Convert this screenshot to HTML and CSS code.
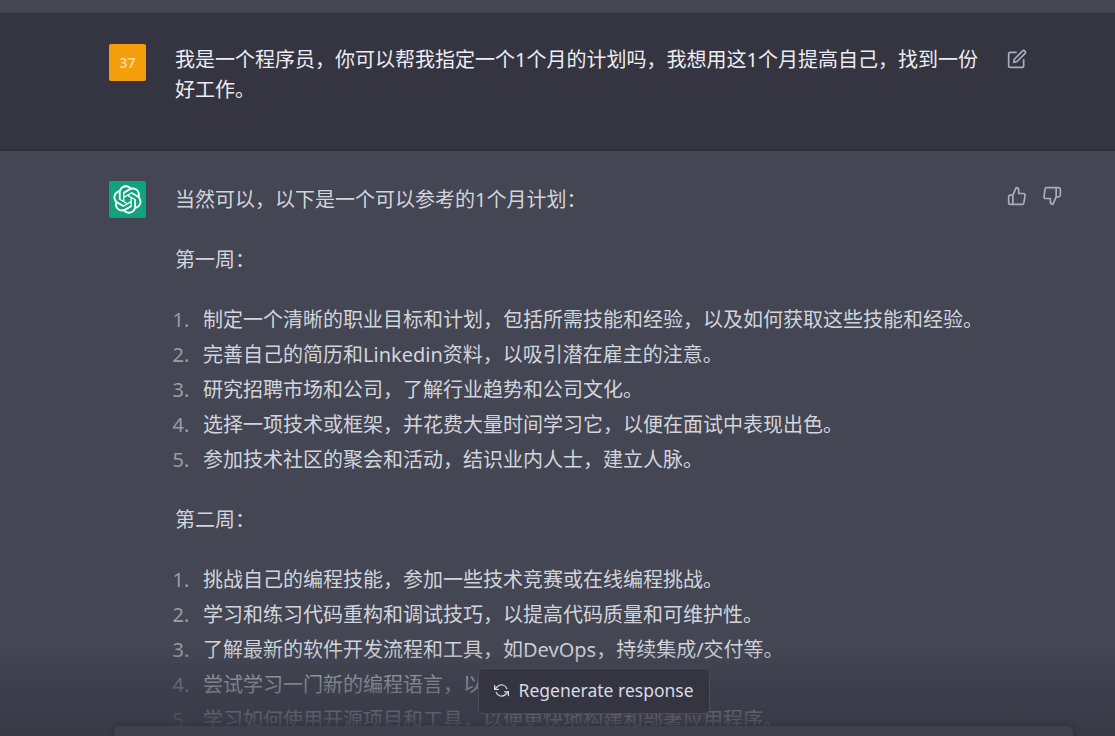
FILE: index.html
```html
<!DOCTYPE html>
<html lang="en">

<head>
    <meta charset="UTF-8">
    <meta name="viewport" content="width=device-width, initial-scale=1.0">
    <title>ChatGPT</title>
    <link rel="stylesheet" href="styles.css">
</head>

<body>

    <div class="chat">
        <!-- End of the previous answer -->
        <div class="prev-strip"></div>

        <!-- Question -->
        <div class="message user">
            <div class="avatar user-avatar">37</div>
            <div class="message-text">
                <p>我是一个程序员，你可以帮我指定一个1个月的计划吗，我想用这1个月提高自己，找到一份好工作。</p>
            </div>
            <div class="actions">
                <svg class="icon" viewBox="0 0 24 24">
                    <path d="M11 4H4a2 2 0 0 0-2 2v14a2 2 0 0 0 2 2h14a2 2 0 0 0 2-2v-7"></path>
                    <path d="M18.5 2.5a2.121 2.121 0 0 1 3 3L12 15l-4 1 1-4 9.5-9.5z"></path>
                </svg>
            </div>
        </div>

        <!-- Answer -->
        <div class="message assistant">
            <div class="avatar bot-avatar">
                <svg viewBox="0 0 41 41">
                    <path fill="currentColor" d="M37.5324 16.8707C37.9808 15.5241 38.1363 14.0974 37.9886 12.6859C37.8409 11.2744 37.3934 9.91076 36.676 8.68622C35.6126 6.83404 33.9882 5.3676 32.0373 4.4985C30.0864 3.62941 27.9098 3.40259 25.8215 3.85078C24.8796 2.7893 23.7219 1.94125 22.4257 1.36341C21.1295 0.785575 19.7249 0.491269 18.3058 0.500197C16.1708 0.495044 14.0893 1.16803 12.3614 2.42214C10.6335 3.67624 9.34853 5.44666 8.6917 7.47815C7.30085 7.76286 5.98686 8.3414 4.8377 9.17505C3.68854 10.0087 2.73073 11.0782 2.02839 12.312C0.956464 14.1591 0.498905 16.2988 0.721698 18.4228C0.944492 20.5467 1.83612 22.5449 3.268 24.1293C2.81966 25.4759 2.66413 26.9026 2.81182 28.3141C2.95951 29.7256 3.40701 31.0892 4.12437 32.3138C5.18791 34.1659 6.8123 35.6322 8.76321 36.5013C10.7141 37.3704 12.8907 37.5973 14.9789 37.1492C15.9208 38.2107 17.0786 39.0587 18.3747 39.6366C19.6709 40.2144 21.0755 40.5087 22.4946 40.4998C24.6307 40.5054 26.7133 39.8321 28.4418 38.5772C30.1704 37.3223 31.4556 35.5506 32.1119 33.5179C33.5027 33.2332 34.8167 32.6547 35.9659 31.821C37.115 30.9874 38.0728 29.9178 38.7752 28.684C39.8458 26.8371 40.3023 24.6979 40.0789 22.5748C39.8556 20.4517 38.9639 18.4544 37.5324 16.8707ZM22.4978 37.8849C20.7443 37.8874 19.0459 37.2733 17.6994 36.1501C17.7601 36.117 17.8666 36.0586 17.936 36.0161L25.9004 31.4156C26.1003 31.3019 26.2663 31.137 26.3813 30.9378C26.4964 30.7386 26.5563 30.5124 26.5549 30.2825V19.0542L29.9213 20.998C29.9389 21.0068 29.9541 21.0198 29.9656 21.0359C29.977 21.052 29.9842 21.0707 29.9867 21.0902V30.3889C29.9842 32.375 29.1946 34.2791 27.7909 35.6841C26.3872 37.0892 24.4838 37.8806 22.4978 37.8849ZM6.39227 31.0064C5.51397 29.4888 5.19742 27.7107 5.49804 25.9832C5.55718 26.0187 5.66048 26.0818 5.73461 26.1244L13.699 30.7248C13.8975 30.8408 14.1233 30.902 14.3532 30.902C14.583 30.902 14.8088 30.8408 15.0073 30.7248L24.731 25.1103V28.9979C24.7321 29.0177 24.7283 29.0376 24.7199 29.0556C24.7115 29.0736 24.6988 29.0893 24.6829 29.1012L16.6317 33.7497C14.9096 34.7416 12.8643 35.0097 10.9447 34.4954C9.02506 33.9811 7.38785 32.7263 6.39227 31.0064ZM4.29707 13.6194C5.17156 12.0998 6.55279 10.9364 8.19885 10.3327C8.19885 10.4013 8.19491 10.5228 8.19491 10.6071V19.808C8.19351 20.0378 8.25334 20.2638 8.36823 20.4629C8.48312 20.6619 8.64893 20.8267 8.84863 20.9404L18.5723 26.5542L15.206 28.4979C15.1894 28.5089 15.1703 28.5155 15.1505 28.5173C15.1307 28.5191 15.1107 28.516 15.0924 28.5082L7.04046 23.8557C5.32135 22.8601 4.06716 21.2235 3.55289 19.3046C3.03862 17.3858 3.30624 15.3413 4.29707 13.6194ZM31.955 20.0556L22.2312 14.4411L25.5976 12.4981C25.6142 12.4872 25.6333 12.4805 25.6531 12.4787C25.6729 12.4769 25.6928 12.4801 25.7111 12.4879L33.7631 17.1364C34.9967 17.849 36.0017 18.8982 36.6606 20.1613C37.3194 21.4244 37.6047 22.849 37.4832 24.2684C37.3617 25.6878 36.8382 27.0432 35.9743 28.1759C35.1103 29.3086 33.9415 30.1717 32.6047 30.6641C32.6047 30.5947 32.6047 30.4733 32.6047 30.3889V21.188C32.6066 20.9586 32.5474 20.7328 32.4332 20.5338C32.319 20.3348 32.154 20.1698 31.955 20.0556ZM35.3055 15.0128C35.2464 14.9765 35.1431 14.9142 35.069 14.8717L27.1045 10.2712C26.906 10.1554 26.6803 10.0943 26.4504 10.0943C26.2206 10.0943 25.9948 10.1554 25.7963 10.2712L16.0726 15.8858V11.9982C16.0715 11.9783 16.0753 11.9585 16.0837 11.9405C16.0921 11.9225 16.1048 11.9068 16.1207 11.8949L24.1719 7.25025C25.4053 6.53903 26.8158 6.19376 28.2383 6.25482C29.6608 6.31589 31.0364 6.78077 32.2044 7.59508C33.3723 8.40939 34.2842 9.53945 34.8334 10.8531C35.3826 12.1667 35.5464 13.6095 35.3055 15.0128ZM14.2424 21.9419L10.8752 19.9981C10.8576 19.9893 10.8423 19.9763 10.8309 19.9602C10.8195 19.9441 10.8122 19.9254 10.8098 19.9058V10.6071C10.8107 9.18295 11.2173 7.78848 11.9819 6.58696C12.7466 5.38544 13.8377 4.42659 15.1275 3.82264C16.4173 3.21869 17.8524 2.99464 19.2649 3.1767C20.6775 3.35876 22.0089 3.93941 23.1034 4.85067C23.0427 4.88379 22.937 4.94215 22.8668 4.98473L14.9024 9.58517C14.7025 9.69878 14.5366 9.86356 14.4215 10.0626C14.3065 10.2616 14.2466 10.4877 14.2479 10.7175L14.2424 21.9419ZM16.071 17.9991L20.4018 15.4978L24.7325 17.9975V22.9985L20.4018 25.4983L16.071 22.9985V17.9991Z"></path>
                </svg>
            </div>
            <div class="message-text">
                <p>当然可以，以下是一个可以参考的1个月计划：</p>
                <p>第一周：</p>
                <ol>
                    <li>制定一个清晰的职业目标和计划，包括所需技能和经验，以及如何获取这些技能和经验。</li>
                    <li>完善自己的简历和Linkedin资料，以吸引潜在雇主的注意。</li>
                    <li>研究招聘市场和公司，了解行业趋势和公司文化。</li>
                    <li>选择一项技术或框架，并花费大量时间学习它，以便在面试中表现出色。</li>
                    <li>参加技术社区的聚会和活动，结识业内人士，建立人脉。</li>
                </ol>
                <p>第二周：</p>
                <ol>
                    <li>挑战自己的编程技能，参加一些技术竞赛或在线编程挑战。</li>
                    <li>学习和练习代码重构和调试技巧，以提高代码质量和可维护性。</li>
                    <li>了解最新的软件开发流程和工具，如DevOps，持续集成/交付等。</li>
                    <li>尝试学习一门新的编程语言，以扩展自己的技术能力。</li>
                    <li>学习如何使用开源项目和工具，以便更快地构建和部署应用程序。</li>
                </ol>
            </div>
            <div class="actions">
                <svg class="icon" viewBox="0 0 24 24">
                    <path d="M14 9V5a3 3 0 0 0-3-3l-4 9v11h11.28a2 2 0 0 0 2-1.7l1.38-9a2 2 0 0 0-2-2.3zM7 22H4a2 2 0 0 1-2-2v-7a2 2 0 0 1 2-2h3"></path>
                </svg>
                <svg class="icon" viewBox="0 0 24 24">
                    <path d="M10 15v4a3 3 0 0 0 3 3l4-9V2H5.72a2 2 0 0 0-2 1.7l-1.38 9a2 2 0 0 0 2 2.3zm7-13h2.67A2.31 2.31 0 0 1 22 4v7a2.31 2.31 0 0 1-2.33 2H17"></path>
                </svg>
            </div>
        </div>
    </div>

    <!-- Bottom fade, button and input -->
    <div class="bottom-fade">
        <button class="regen">
            <svg viewBox="0 0 24 24">
                <polyline points="1 4 1 10 7 10"></polyline>
                <polyline points="23 20 23 14 17 14"></polyline>
                <path d="M20.49 9A9 9 0 0 0 5.64 5.64L1 10m22 4l-4.64 4.36A9 9 0 0 1 3.51 15"></path>
            </svg>
            Regenerate response
        </button>
        <div class="input-box"></div>
    </div>

</body>

</html>
```

FILE: styles.css
```css
/* Basic reset */
* {
    margin: 0;
    padding: 0;
    box-sizing: border-box;
}

html,
body {
    height: 100%;
    overflow: hidden;
}

body {
    position: relative;
    background-color: #444654;
    font-family: "Noto Sans", "Noto Sans CJK SC", sans-serif;
    font-size: 20px;
    line-height: 30px;
    color: #d1d5db;
}

/* Chat rows */
.prev-strip {
    height: 13px;
    background-color: #444654;
    border-bottom: 1px solid #3c3d48;
}

.message {
    display: flex;
    align-items: flex-start;
    padding-left: 109px;
    padding-right: 53px;
}

.message.user {
    height: 138px;
    padding-top: 31px;
    background-color: #343541;
    border-bottom: 1px solid #2d2e38;
    color: #ececf1;
}

.message.assistant {
    padding-top: 30px;
    background-color: #444654;
}

/* Avatars */
.avatar {
    flex: 0 0 37px;
    height: 37px;
    margin-right: 29px;
    border-radius: 2px;
    display: flex;
    align-items: center;
    justify-content: center;
}

.user-avatar {
    background-color: #f59e0b;
    color: #fcd9a0;
    font-size: 14px;
    font-weight: 600;
}

.bot-avatar {
    background-color: #10a37f;
    color: #fff;
}

.bot-avatar svg {
    width: 29px;
    height: 29px;
}

/* Text */
.message-text {
    width: 815px;
    flex: 0 0 815px;
}

.user .message-text {
    padding-top: 1px;
}

.assistant .message-text {
    padding-top: 4px;
}

.message-text p {
    margin-bottom: 30px;
}

.message-text ol {
    list-style: decimal;
    padding-left: 28px;
    margin-bottom: 30px;
}

.message-text li {
    margin-bottom: 5px;
}

.message-text li::marker {
    content: counter(list-item) ".\00a0\00a0\2009";
    color: #9a9ca8;
}

/* Edit and thumb icons */
.actions {
    display: flex;
    gap: 15px;
    margin-left: 17px;
    padding-top: 5px;
}

.icon {
    width: 20px;
    height: 20px;
    fill: none;
    stroke: #acacbe;
    stroke-width: 2;
    stroke-linecap: round;
    stroke-linejoin: round;
}

/* Bottom area */
.bottom-fade {
    position: absolute;
    left: 0;
    right: 0;
    bottom: 0;
    height: 90px;
    padding-top: 22px;
    display: flex;
    flex-direction: column;
    align-items: center;
    background-image: linear-gradient(180deg, rgba(52, 53, 65, 0), rgba(56, 57, 69, 0.55) 42%, rgba(56, 57, 69, 0.8) 80%, #383945);
}

.regen {
    width: 232px;
    height: 46px;
    flex: 0 0 46px;
    margin-left: 72px;
    display: flex;
    align-items: center;
    gap: 10px;
    padding-left: 15px;
    padding-bottom: 2px;
    background-color: #343541;
    border: 1px solid #4b4c5a;
    border-radius: 5px;
    color: #d9d9e3;
    font-family: inherit;
    font-size: 17.5px;
}

.regen svg {
    width: 15px;
    height: 15px;
    fill: none;
    stroke: currentColor;
    stroke-width: 2;
    stroke-linecap: round;
    stroke-linejoin: round;
}

.input-box {
    width: 959px;
    height: 40px;
    flex: 0 0 40px;
    margin-top: 12px;
    margin-left: 72px;
    background-color: #40414f;
    border-radius: 6px;
    box-shadow: 0 0 6px rgba(0, 0, 0, 0.2);
}
```
